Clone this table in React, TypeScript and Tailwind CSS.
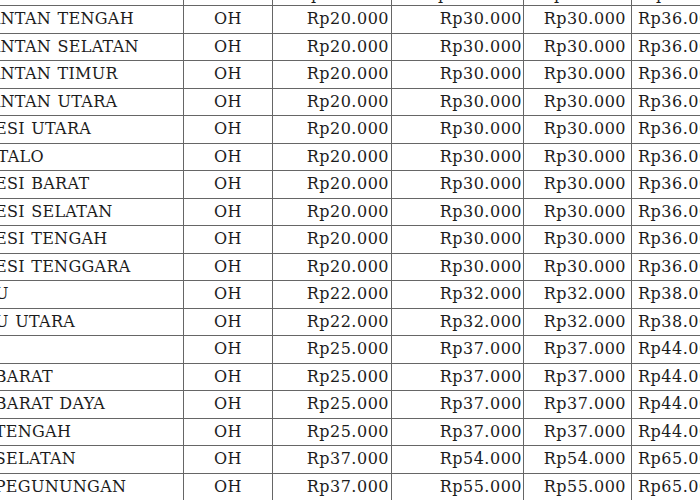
import React from "react";

// Tarif per provinsi (potongan tabel, kolom kiri & kanan terpotong)
const rows: [string, string, string, string, string][] = [
  ["KALIMANTAN TENGAH", "Rp20.000", "Rp30.000", "Rp30.000", "Rp36.000"],
  ["KALIMANTAN SELATAN", "Rp20.000", "Rp30.000", "Rp30.000", "Rp36.000"],
  ["KALIMANTAN TIMUR", "Rp20.000", "Rp30.000", "Rp30.000", "Rp36.000"],
  ["KALIMANTAN UTARA", "Rp20.000", "Rp30.000", "Rp30.000", "Rp36.000"],
  ["SULAWESI UTARA", "Rp20.000", "Rp30.000", "Rp30.000", "Rp36.000"],
  ["GORONTALO", "Rp20.000", "Rp30.000", "Rp30.000", "Rp36.000"],
  ["SULAWESI BARAT", "Rp20.000", "Rp30.000", "Rp30.000", "Rp36.000"],
  ["SULAWESI SELATAN", "Rp20.000", "Rp30.000", "Rp30.000", "Rp36.000"],
  ["SULAWESI TENGAH", "Rp20.000", "Rp30.000", "Rp30.000", "Rp36.000"],
  ["SULAWESI TENGGARA", "Rp20.000", "Rp30.000", "Rp30.000", "Rp36.000"],
  ["MALUKU", "Rp22.000", "Rp32.000", "Rp32.000", "Rp38.000"],
  ["MALUKU UTARA", "Rp22.000", "Rp32.000", "Rp32.000", "Rp38.000"],
  ["PAPUA", "Rp25.000", "Rp37.000", "Rp37.000", "Rp44.000"],
  ["PAPUA BARAT", "Rp25.000", "Rp37.000", "Rp37.000", "Rp44.000"],
  ["PAPUA BARAT DAYA", "Rp25.000", "Rp37.000", "Rp37.000", "Rp44.000"],
  ["PAPUA TENGAH", "Rp25.000", "Rp37.000", "Rp37.000", "Rp44.000"],
  ["PAPUA SELATAN", "Rp37.000", "Rp54.000", "Rp54.000", "Rp65.000"],
  ["PAPUA PEGUNUNGAN", "Rp37.000", "Rp55.000", "Rp55.000", "Rp65.000"],
];

const cell = "border border-[#666] leading-none";

export default function App() {
  return (
    <div className="w-[700px] h-[500px] overflow-hidden bg-white">
      <table
        className="table-fixed w-[802px] border-collapse -ml-[76px] -mt-[23px] text-[16px] text-[#1c1c1c] whitespace-pre"
        style={{ fontFamily: '"DejaVu Serif", serif' }}
      >
        <colgroup>
          <col className="w-[259px]" />
          <col className="w-[89px]" />
          <col className="w-[119px]" />
          <col className="w-[132px]" />
          <col className="w-[108px]" />
          <col className="w-[95px]" />
        </colgroup>
        <thead>
          <tr className="h-[28px]">
            <th className={`${cell} font-normal`} />
            <th className={`${cell} font-normal`} />
            <th className={`${cell} font-normal text-left pl-[38px] pt-[4px]`}>p</th>
            <th className={`${cell} font-normal text-left pl-[46px] pt-[4px]`}>p</th>
            <th className={`${cell} font-normal text-left pl-[30px] pt-[4px]`}>p</th>
            <th className={`${cell} font-normal text-left pl-[24px] pt-[4px]`}>p</th>
          </tr>
        </thead>
        <tbody>
          {rows.map(([name, a, b, c, d]) => (
            <tr key={name} className="h-[27.5px]">
              <td className={`${cell} pl-[6px] tracking-[0.3px] [word-spacing:1px]`}>{name}</td>
              <td className={`${cell} text-center tracking-[0.5px]`}>OH</td>
              <td className={`${cell} text-right pr-[2px] tracking-[0.5px]`}>{a}</td>
              <td className={`${cell} text-right pr-[1px] tracking-[0.5px]`}>{b}</td>
              <td className={`${cell} text-right pr-[5px] tracking-[0.5px]`}>{c}</td>
              <td className={`${cell} text-left pl-[6px] tracking-[0.5px]`}>{d}</td>
            </tr>
          ))}
        </tbody>
      </table>
    </div>
  );
}
